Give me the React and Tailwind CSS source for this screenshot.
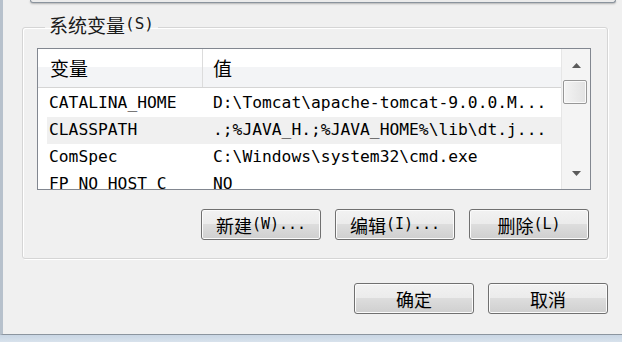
import React from 'react';

const MONO = "font-['DejaVu_Sans_Mono','Noto_Sans_CJK_SC',monospace]";
const CJK = "font-['Noto_Sans_CJK_SC','DejaVu_Sans',sans-serif]";

// 系统变量列表
const rows = [
  { name: 'CATALINA_HOME', value: 'D:\\Tomcat\\apache-tomcat-9.0.0.M...' },
  { name: 'CLASSPATH', value: '.;%JAVA_H.;%JAVA_HOME%\\lib\\dt.j...', selected: true },
  { name: 'ComSpec', value: 'C:\\Windows\\system32\\cmd.exe' },
  { name: 'FP_NO_HOST_C', value: 'NO' },
];

const Btn = ({ label, hot }) => (
  <button className="w-[120px] h-[31px] flex items-center justify-center rounded-[3px] border border-[#707070] bg-[linear-gradient(#f2f2f2_0%,#ebebeb_50%,#dddddd_50%,#cfcfcf_100%)] shadow-[inset_0_0_0_1px_#fbfbfb] text-black">
    <span className={`${CJK} text-[18px] leading-none`}>{label}</span>
    {hot && <span className={`${MONO} text-[15px] leading-none`}>{hot}</span>}
  </button>
);

const Arrow = ({ down }) => (
  <svg width="9" height="5" viewBox="0 0 9 5">
    {down ? <path d="M0 0h9L4.5 5z" fill="#5b5b5b" /> : <path d="M0 5h9L4.5 0z" fill="#5b5b5b" />}
  </svg>
);

export default function App() {
  return (
    <div className="w-[622px] h-[342px] flex flex-col bg-[#cbd8e6] overflow-hidden">
      <div className="h-[335px] flex flex-col bg-[#f0f0f0] border-l-[3px] border-b border-l-[#b7c1cc] border-b-[#8c959f]">
        {/* bord inférieur de la zone du dessus */}
        <div className="ml-[27px] w-[586px] h-[3px] bg-[#ebebeb] border-x border-b border-[#8a939d] rounded-b-[5px] shadow-[0_1px_2px_rgba(0,0,0,0.25)]" />

        <fieldset className="mt-[11px] ml-[19px] w-[586px] border border-[#d5d5d5] rounded-[3px] pl-[14px] pr-[16px] pb-[18px] shadow-[inset_1px_1px_0_#fff,1px_1px_0_#fff]">
          <legend className="ml-[8px] px-[4px] h-[26px] pb-[6px] flex items-center text-[#1a1a1a]">
            <span className={`${CJK} text-[19px] leading-none`}>系统变量</span>
            <span className={`${MONO} text-[16px] leading-none`}>(S)</span>
          </legend>

          <div className="mt-[8px] h-[142px] flex border border-[#828790] bg-white">
            <div className="flex-1 overflow-hidden">
              <div className="h-[39px] flex border-b border-[#d5d5d5] bg-[linear-gradient(#ffffff_0%,#ffffff_48%,#f3f4f6_48%,#f3f4f6_100%)] text-black">
                <div className={`w-[165px] border-r border-[#dcdcdc] pl-[12px] flex items-center ${CJK} text-[19px]`}>变量</div>
                <div className={`pl-[10px] flex items-center ${CJK} text-[19px]`}>值</div>
              </div>
              <div className="pt-[2px]">
                {rows.map((row) => (
                  <div
                    key={row.name}
                    className={`ml-[9px] h-[27px] flex items-center text-black ${MONO} text-[16.3px] ${row.selected ? 'bg-[#f0f0f0]' : ''}`}
                  >
                    <div className="w-[155px] pl-[2px] whitespace-nowrap">{row.name}</div>
                    <div className="pl-[11px] whitespace-nowrap">{row.value}</div>
                  </div>
                ))}
              </div>
            </div>

            <div className="w-[29px] flex flex-col border-l border-[#e6e6e6] bg-[#f4f4f4]">
              <div className="h-[31px] flex items-center justify-center pt-[2px]">
                <Arrow />
              </div>
              <div className="ml-[1px] w-[24px] h-[24px] rounded-[2px] border border-[#979797] bg-[linear-gradient(90deg,#f3f3f3,#e2e2e2)] shadow-[inset_0_0_0_1px_#fafafa]" />
              <div className="flex-1" />
              <div className="h-[31px] flex items-center justify-center">
                <Arrow down />
              </div>
            </div>
          </div>

          <div className="mt-[19px] pr-[2px] flex justify-end gap-[14px]">
            <Btn label="新建" hot="(W)..." />
            <Btn label="编辑" hot="(I)..." />
            <Btn label="删除" hot="(L)" />
          </div>
        </fieldset>

        <div className="mt-[24px] ml-[19px] w-[586px] flex justify-end gap-[14px]">
          <Btn label="确定" />
          <Btn label="取消" />
        </div>
      </div>
      <div className="flex-1 bg-[linear-gradient(#c9d6e4,#d8e2ec)]" />
    </div>
  );
}
